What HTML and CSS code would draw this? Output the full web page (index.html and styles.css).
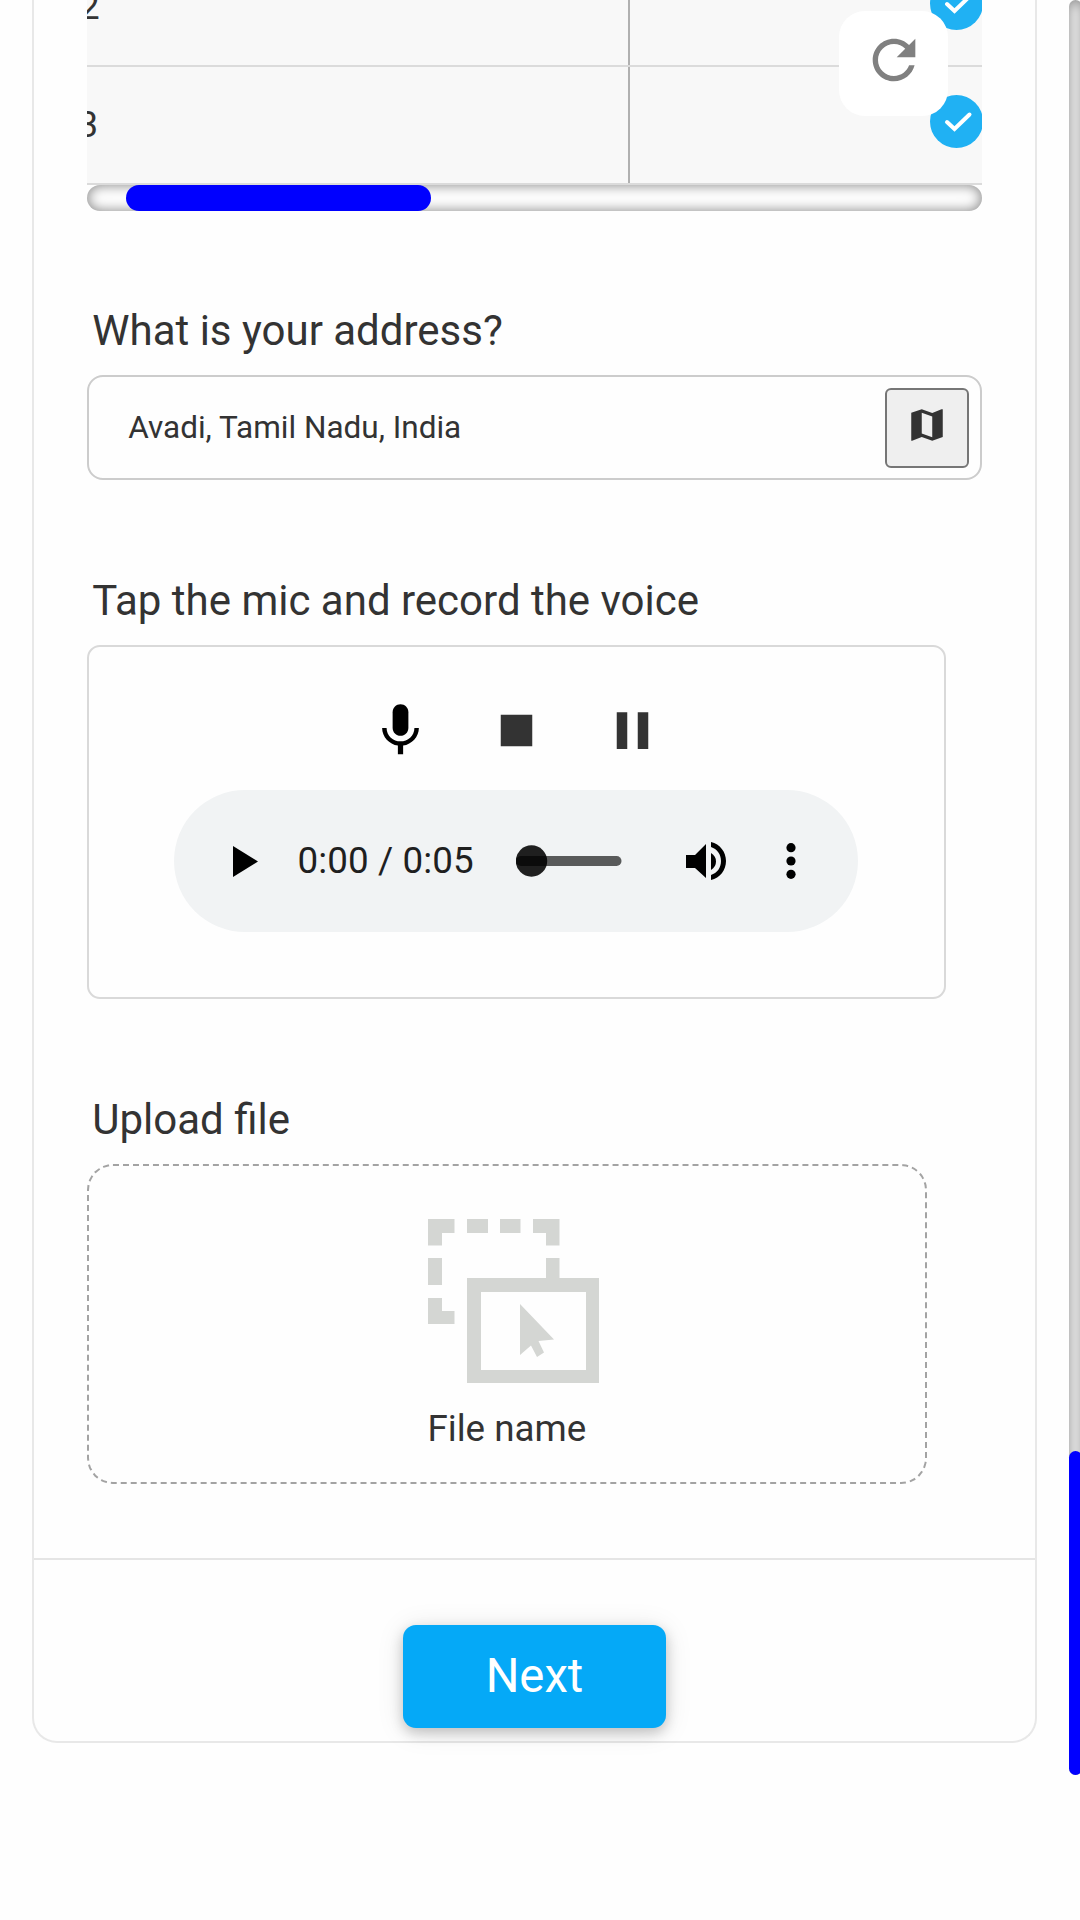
FILE: index.html
```html
<!DOCTYPE html>
<html lang="en">
<head>
<meta charset="utf-8">
<title>Form</title>
<link rel="stylesheet" href="styles.css">
</head>
<body>
<main class="card">
  <div class="content">
    <div class="table">
      <div class="row row-first">
        <div class="cell-num"><span class="num num-two">2</span></div>
        <div class="cell-check"><svg class="check" viewBox="0 0 53 53"><circle cx="26.5" cy="26.5" r="26.5"/><path d="M17 27l7.500 7 15-14.500"/></svg></div>
      </div>
      <div class="row">
        <div class="cell-num"><span class="num">3</span></div>
        <div class="cell-check"><svg class="check" viewBox="0 0 53 53"><circle cx="26.5" cy="26.5" r="26.5"/><path d="M17 27l7.500 7 15-14.500"/></svg></div>
      </div>
    </div>
    <div class="hscroll"><div class="hthumb"></div></div>

    <section class="field">
      <label class="label">What is your address?</label>
      <div class="address">
        <span class="address-text">Avadi, Tamil Nadu, India</span>
        <button class="map-btn" aria-label="Map"><svg viewBox="0 0 24 24"><path fill-rule="evenodd" d="M3 5 9 3l6 2.100L20.300 3H21v15.900L15 21l-6-2.100L3.500 21H3zM15 19V7.110L9 5v11.890z"/></svg></button>
      </div>
    </section>

    <section class="field">
      <label class="label">Tap the mic and record the voice</label>
      <div class="recorder">
        <div class="controls">
          <svg class="mic" viewBox="0 0 24 24"><path d="M12 14c1.660 0 3-1.340 3-3V5c0-1.660-1.340-3-3-3S9 3.340 9 5v6c0 1.660 1.340 3 3 3z"/><path d="M17.300 11c0 3-2.540 5.100-5.300 5.100S6.700 14 6.700 11H5c0 3.410 2.720 6.230 6 6.720V21h2v-3.280c3.280-.48 6-3.300 6-6.720h-1.700z"/></svg>
          <svg viewBox="0 0 24 24"><path d="M6 6h12v12H6z"/></svg>
          <svg viewBox="0 0 24 24"><path d="M6 19h4V5H6v14zm8-14v14h4V5h-4z"/></svg>
        </div>
        <div class="player">
          <svg class="play" viewBox="0 0 25 31"><path d="M0 0v31l25-15.500z"/></svg>
          <span class="time">0:00 / 0:05</span>
          <svg class="slider" viewBox="0 0 106 32"><circle cx="15.500" cy="16" r="15.700" fill="#1f1f1f"/><rect x="0" y="11" width="105.500" height="10" rx="5" fill="#000" fill-opacity=".63"/></svg>
          <svg class="volume" viewBox="0 0 40 38"><path d="M0 13h9L20 2v34L9 26H0z"/><path d="M25 11q5 3 5 8.500T25 28z"/><path d="M25 0c9 2 15 10 15 19s-6 17-15 19v-5c6-2 10-7 10-14S31 7 25 5z"/></svg>
          <svg class="more" viewBox="0 0 10 36"><circle cx="5" cy="4.700" r="4.600"/><circle cx="5" cy="18" r="4.600"/><circle cx="5" cy="31.300" r="4.600"/></svg>
        </div>
      </div>
    </section>

    <section class="field">
      <label class="label">Upload file</label>
      <div class="upload">
        <svg class="upload-icon" viewBox="0 0 171 164"><path d="M0 0h26.500v14H14v12.500H0zM39 0h21v14H39zM72 0h20.500v14H72zM105 0h26.500v26.500H118V14h-13zM0 39h14v27H0zM118 39h13.500v21H118zM0 79h14v13h12.500v13H0z"/><path fill-rule="evenodd" d="M39 59h132v105H39zM53 73v78h105V73z"/><path d="M92 85l34 35.500-15.500 1.500 5.500 11.500-7 4.500-6-11.500L92 136z"/></svg>
        <span class="file-name">File name</span>
      </div>
    </section>
  </div>
  <footer class="footer"><button class="next">Next</button></footer>
</main>
<button class="refresh" aria-label="Refresh"><svg viewBox="0 0 24 24"><path d="M17.650 6.350C16.200 4.900 14.210 4 12 4c-4.420 0-7.990 3.580-7.990 8s3.570 8 7.990 8c3.730 0 6.840-2.550 7.730-6h-2.080c-.82 2.330-3.040 4-5.650 4-3.310 0-6-2.690-6-6s2.690-6 6-6c1.660 0 3.140.69 4.220 1.780L13 11h7V4l-2.350 2.350z"/></svg></button>
<div class="vscroll"><div class="vthumb"></div></div>
</body>
</html>
```

FILE: styles.css
```css
* { box-sizing: border-box; }
body {
  position: relative;
  width: 1080px;
  height: 1920px;
  margin: 0;
  overflow: hidden;
  background: #fefefe;
  color: #333;
  font-family: Roboto, "Liberation Sans", sans-serif;
}
svg { display: block; flex: none; }
button { font-family: inherit; padding: 0; }

.card {
  display: flex;
  flex-direction: column;
  width: 1005px;
  height: 1743px;
  margin-left: 32px;
  border: 2px solid #e8e8e8;
  border-top: 0;
  border-radius: 0 0 25px 25px;
}
.content { height: 1558px; padding: 0 53px; }

.table { width: 895px; overflow: hidden; background: #f8f8f8; }
.row { display: flex; height: 118px; border-bottom: 2px solid #dbdbdb; }
.row-first { height: 67px; align-items: flex-end; }
.row-first > div { height: 116px; flex-shrink: 0; }
.cell-num {
  width: 543px;
  border-right: 2px solid #b0b0b0;
  padding-top: 36px;
  flex: none;
}
.num { display: block; margin-left: -9.5px; font-size: 36.75px; line-height: 43px; }
.num-two { margin-left: -8px; }
.cell-check { width: 352px; padding: 28px 0 0 300px; }
.check { width: 53px; height: 53px; }
.check circle { fill: #20b1f3; }
.check path { fill: none; stroke: #fff; stroke-width: 4px; stroke-linecap: round; }

.hscroll {
  width: 895px;
  height: 26px;
  padding-left: 39px;
  border-radius: 13px;
  box-shadow: inset 0 0 13px grey;
}
.hthumb { width: 305px; height: 26px; border-radius: 13px; background: #00f; }

.field { margin-top: 96px; }
.hscroll + .field { margin-top: 95px; }
.label { display: block; margin: 0 0 20px 5.25px; font-size: 42px; line-height: 49px; white-space: nowrap; }

.address {
  display: flex;
  align-items: center;
  justify-content: space-between;
  width: 895px;
  height: 105px;
  padding: 0 11px 0 39.25px;
  border: 2px solid #ccc;
  border-radius: 16px;
}
.address-text { font-size: 31.5px; line-height: 37px; }
.map-btn {
  display: flex;
  justify-content: center;
  width: 84px;
  height: 80px;
  padding-top: 14px;
  border: 2px solid #767676;
  border-radius: 6px;
  background: #efefef;
}
.map-btn svg { width: 42px; height: 42px; fill: #333; }

.recorder {
  display: flex;
  flex-direction: column;
  align-items: center;
  width: 859px;
  height: 354px;
  padding: 52px 1px 0 0;
  border: 2px solid #d9d9d9;
  border-radius: 13px;
}
.controls { display: flex; gap: 52.5px; margin-left: 1px; }
.controls svg { width: 63px; height: 63px; fill: #333; }
.controls .mic { margin-left: -.5px; margin-right: .5px; fill: #000; }
.player {
  display: flex;
  align-items: center;
  width: 684px;
  height: 142px;
  margin-top: 28px;
  padding-left: 59px;
  border-radius: 71px;
  background: #f1f3f4;
}
.play { width: 25px; height: 31px; }
.time { width: 178px; margin: -1px 0 0 39.5px; color: #1f1f1f; font-size: 36.75px; line-height: 43px; letter-spacing: .1px; white-space: nowrap; }
.slider { width: 106px; height: 32px; margin-left: 40.5px; }
.volume { width: 40px; height: 38px; margin-left: 64px; }
.more { width: 10px; height: 36px; margin-left: 59.5px; }

.upload {
  display: flex;
  flex-direction: column;
  align-items: flex-start;
  width: 840px;
  height: 320px;
  padding: 53px 0 0 339px;
  border: 2px dashed #a3a3a3;
  border-radius: 26px;
}
.upload-icon { width: 171px; height: 164px; fill: #d4d6d3; }
.file-name { margin: 24px 0 0 -.6px; font-size: 36.75px; line-height: 43px; }

.footer {
  display: flex;
  justify-content: center;
  height: 183px;
  padding-top: 65px;
  border-top: 2px solid #e5e5e5;
}
.next {
  width: 263px;
  height: 103px;
  padding-bottom: 2px;
  border: 0;
  border-radius: 13px;
  background: #05a9f7;
  color: #fff;
  font-size: 47.25px;
  box-shadow: 0 5px 13px rgba(0, 0, 0, .2), 0 3px 28px rgba(0, 0, 0, .1);
}

.refresh {
  position: absolute;
  top: 11px;
  left: 839px;
  display: flex;
  justify-content: center;
  align-items: flex-start;
  width: 109px;
  height: 105px;
  padding-top: 16.5px;
  border: 0;
  border-radius: 26px;
  background: #fff;
}
.refresh svg { width: 64px; height: 64px; fill: #808080; }

.vscroll {
  position: absolute;
  top: 0;
  left: 1069px;
  width: 13px;
  height: 1775px;
  padding-top: 1451px;
  border-radius: 7px;
  box-shadow: inset 0 0 13px grey;
}
.vthumb { height: 324px; border-radius: 7px; background: #00f; }
```
